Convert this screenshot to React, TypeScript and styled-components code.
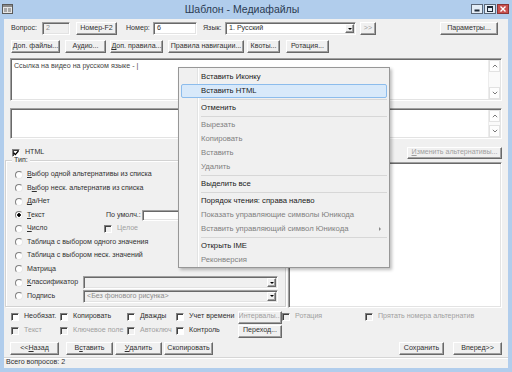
import styled, { createGlobalStyle, css } from 'styled-components'

const GlobalStyle = createGlobalStyle`
  html, body {
    margin: 0;
    padding: 0;
    background: #b1cdec;
  }
  body {
    font-family: "Liberation Sans", Arial, sans-serif;
  }
`

const raised = css`
  border: 1px solid;
  border-color: #fff #696969 #696969 #fff;
  box-shadow: inset -1px -1px 0 #a0a0a0;
  background: #f0f0f0;
`

const sunken = css`
  border: 1px solid;
  border-color: #a0a0a0 #fff #fff #a0a0a0;
  box-shadow: inset 1px 1px 0 #696969, inset -1px -1px 0 #e3e3e3;
`

const Frame = styled.div`
  width: 512px;
  height: 372px;
  display: flex;
  flex-direction: column;
  background: #b1cdec;
  overflow: hidden;
`

const TitleBar = styled.div`
  height: 19px;
  flex-shrink: 0;
  display: flex;
  align-items: flex-start;
  padding: 0 3px 0 2px;
`

const AppIcon = styled.svg`
  margin-top: 4px;
  flex-shrink: 0;
`

const Title = styled.div`
  flex: 1;
  text-align: center;
  font-size: 10.5px;
  line-height: 19px;
  color: #2b3b52;
`

const Controls = styled.div`
  display: flex;
  gap: 1px;
  margin-top: 4px;
`

const Control = styled.div<{ $close?: boolean }>`
  width: 12px;
  height: 10px;
  box-sizing: border-box;
  border: 1px solid ${(p) => (p.$close ? '#8a3434' : '#5b6778')};
  background: ${(p) => (p.$close ? '#c9504e' : '#e4edf7')};
  display: flex;
  align-items: center;
  justify-content: center;
`

const Client = styled.div`
  flex: 1;
  min-height: 0;
  margin: 0 4px 4px;
  background: #f0f0f0;
  display: flex;
  flex-direction: column;
  position: relative;
  font-size: 7.1px;
  line-height: 1;
  color: #303030;
`

const Row = styled.div<{ $top: number; $h: number }>`
  display: flex;
  align-items: center;
  flex-shrink: 0;
  height: ${(p) => p.$h}px;
  margin-top: ${(p) => p.$top}px;
  padding-right: 6px;
`

const Label = styled.span<{ $w?: number; $ml?: number; $off?: boolean }>`
  flex-shrink: 0;
  width: ${(p) => (p.$w ? `${p.$w}px` : 'auto')};
  margin-left: ${(p) => p.$ml ?? 0}px;
  white-space: nowrap;
  color: ${(p) => (p.$off ? '#a0a0a0' : 'inherit')};
`

const Btn = styled.div<{ $w: number; $ml?: number; $h?: number; $off?: boolean }>`
  ${raised}
  box-sizing: border-box;
  flex-shrink: 0;
  width: ${(p) => p.$w}px;
  height: ${(p) => p.$h ?? 13}px;
  margin-left: ${(p) => p.$ml ?? 0}px;
  display: flex;
  align-items: center;
  justify-content: center;
  white-space: nowrap;
  overflow: hidden;
  color: ${(p) => (p.$off ? '#a0a0a0' : 'inherit')};
`

const Field = styled.div<{ $w: number; $ml?: number; $h?: number; $off?: boolean }>`
  ${sunken}
  box-sizing: border-box;
  flex-shrink: 0;
  width: ${(p) => p.$w}px;
  height: ${(p) => p.$h ?? 13}px;
  margin-left: ${(p) => p.$ml ?? 0}px;
  padding: 0 1px 0 3px;
  display: flex;
  align-items: center;
  white-space: nowrap;
  overflow: hidden;
  background: ${(p) => (p.$off ? '#f0f0f0' : '#fff')};
  color: ${(p) => (p.$off ? '#8c8c8c' : 'inherit')};
`

const FieldText = styled.span`
  flex: 1;
  overflow: hidden;
`

const DropBtn = styled.span`
  ${raised}
  box-sizing: border-box;
  width: 9px;
  height: 9px;
  flex-shrink: 0;
  display: flex;
  align-items: center;
  justify-content: center;

  &::after {
    content: '';
    border-left: 2px solid transparent;
    border-right: 2px solid transparent;
    border-top: 2px solid #000;
  }
`

const Memo = styled.div<{ $top: number; $h: number }>`
  ${sunken}
  box-sizing: border-box;
  flex-shrink: 0;
  margin: ${(p) => p.$top}px 6px 0;
  height: ${(p) => p.$h}px;
  background: #fff;
  display: flex;
`

const MemoText = styled.div`
  flex: 1;
  padding: 4px 3px;
  color: #444;
  white-space: nowrap;
`

const ScrollBar = styled.div`
  width: 11px;
  margin: 1px 1px 1px 0;
  background: #fafafa;
  border-left: 1px solid #ececec;
  display: flex;
  flex-direction: column;
  justify-content: space-between;
`

const ScrollArrow = styled.div`
  height: 10px;
  border: 1px solid #e2e2e2;
  background: #fdfdfd;
  display: flex;
  align-items: center;
  justify-content: center;
`

const CheckBox = styled.span<{ $off?: boolean }>`
  box-sizing: border-box;
  width: 8px;
  height: 8px;
  flex-shrink: 0;
  border: 1px solid;
  border-color: #808080 #fff #fff #808080;
  box-shadow: inset 1px 1px 0 #404040;
  background: ${(p) => (p.$off ? '#f0f0f0' : '#fff')};
  display: flex;
  align-items: center;
  justify-content: center;
`

const Check = styled.div<{ $off?: boolean; $ml?: number }>`
  display: flex;
  align-items: center;
  gap: 5px;
  flex-shrink: 0;
  margin-left: ${(p) => p.$ml ?? 0}px;
  white-space: nowrap;
  color: ${(p) => (p.$off ? '#a0a0a0' : 'inherit')};
`

const Main = styled.div`
  display: flex;
  flex-shrink: 0;
  height: 149px;
  padding: 0 6px 0 1px;
`

const Group = styled.div`
  position: relative;
  box-sizing: border-box;
  width: 281px;
  height: 147px;
  margin-top: 1px;
  border: 1px solid #d2d2d2;
  box-shadow: inset 1px 1px 0 #fff, 1px 1px 0 #fff;
  padding: 7px 0 0 9px;
  display: flex;
  flex-direction: column;
`

const Legend = styled.span`
  position: absolute;
  top: -4px;
  left: 6px;
  padding: 0 2px;
  background: #f0f0f0;
`

const OptionRow = styled.div`
  height: 13.5px;
  display: flex;
  align-items: center;
  flex-shrink: 0;
`

const Radio = styled.div<{ $w?: number }>`
  display: flex;
  align-items: center;
  gap: 4px;
  flex-shrink: 0;
  width: ${(p) => (p.$w ? `${p.$w}px` : 'auto')};
  white-space: nowrap;
`

const RadioDot = styled.span<{ $on?: boolean }>`
  box-sizing: border-box;
  width: 8px;
  height: 8px;
  flex-shrink: 0;
  border-radius: 50%;
  border: 1px solid;
  border-color: #808080 #e8e8e8 #e8e8e8 #808080;
  background: ${(p) =>
    p.$on ? 'radial-gradient(circle, #000 0 1.5px, #fff 2px)' : '#fff'};
`

const ListBox = styled.div`
  ${sunken}
  box-sizing: border-box;
  width: 214px;
  height: 146px;
  margin: 3px 0 0 2px;
  background: #fff;
`

const Options = styled.div`
  display: grid;
  grid-template-columns: 49px 67px 49px 62px 44px 83px auto;
  grid-auto-rows: 14px;
  align-items: center;
  flex-shrink: 0;
  margin-top: 2px;
  padding-left: 7px;
`

const Spacer = styled.div`
  flex: 1;
`

const StatusBar = styled.div`
  flex: 1;
  margin-top: 2px;
  border-top: 1px solid #d6d6d6;
  box-shadow: inset 0 1px 0 #fff;
  display: flex;
  align-items: center;
  padding-left: 2px;
`

const Menu = styled.div`
  position: absolute;
  left: 174px;
  top: 48px;
  width: 212px;
  box-sizing: border-box;
  padding: 2px 0 0;
  border: 1px solid #979797;
  background: linear-gradient(
    to right,
    #f0f0f0 0 18px,
    #e2e3e3 18px 19px,
    #fff 19px 20px,
    #f0f0f0 20px
  );
  box-shadow: 2px 2px 3px rgba(0, 0, 0, 0.25);
  font-size: 7.7px;
`

const MenuItem = styled.div<{ $off?: boolean; $hot?: boolean }>`
  position: relative;
  box-sizing: border-box;
  height: 14px;
  margin: 0 2px;
  padding-left: 19px;
  display: flex;
  align-items: center;
  white-space: nowrap;
  border: 1px solid transparent;
  border-radius: 2px;
  color: ${(p) => (p.$off ? '#808080' : '#1a1a1a')};
  ${(p) =>
    p.$hot &&
    css`
      background: #d8e9fa;
      border-color: #8cbcec;
    `}
`

const SubArrow = styled.span`
  position: absolute;
  right: 5px;
  top: 4px;
  border-top: 2px solid transparent;
  border-bottom: 2px solid transparent;
  border-left: 2px solid #8a8a8a;
`

const MenuSep = styled.div`
  height: 3px;
  margin: 0 2px 0 22px;
  display: flex;
  align-items: center;

  &::after {
    content: '';
    flex: 1;
    height: 1px;
    background: #d7d7d7;
  }
`

function Tick() {
  return (
    <svg width="6" height="6" viewBox="0 0 6 6">
      <path d="M0.6 2.8 L2.3 4.6 L5.4 1" fill="none" stroke="#000" strokeWidth="1.3" />
    </svg>
  )
}

function Chevron({ down }: { down?: boolean }) {
  return (
    <svg width="6" height="4" viewBox="0 0 6 4">
      <path
        d={down ? 'M0.8 0.8 L3 3 L5.2 0.8' : 'M0.8 3.2 L3 1 L5.2 3.2'}
        fill="none"
        stroke="#6a6a6a"
        strokeWidth="0.9"
      />
    </svg>
  )
}

function ScrollSide() {
  return (
    <ScrollBar>
      <ScrollArrow>
        <Chevron />
      </ScrollArrow>
      <ScrollArrow>
        <Chevron down />
      </ScrollArrow>
    </ScrollBar>
  )
}

const checkRows = [
  { text: 'Необязат.' },
  { text: 'Копировать' },
  { text: 'Дважды' },
  { text: 'Учет времени' },
  { button: 'Интервалы...', off: true },
  { text: 'Ротация', off: true },
  { text: 'Прятать номера альтернатив', off: true },
  { text: 'Текст', off: true },
  { text: 'Ключевое поле', off: true },
  { text: 'Автоключ', off: true },
  { text: 'Контроль' },
  { button: 'Переход...' },
]

export default function App() {
  return (
    <Frame>
      <GlobalStyle />
      <TitleBar>
        <AppIcon width="11" height="10" viewBox="0 0 11 10">
          <rect x="0.5" y="0.5" width="10" height="9" fill="#e6e6e6" stroke="#5a5a5a" />
          <rect x="1" y="1" width="9" height="2" fill="#8a8a8a" />
          <path d="M2 5 H5 M2 7 H5 M6 5 H9 M6 7 H9" stroke="#6a6a6a" />
        </AppIcon>
        <Title>Шаблон - Медиафайлы</Title>
        <Controls>
          <Control>
            <svg width="6" height="6" viewBox="0 0 6 6">
              <rect x="0.5" y="3.5" width="5" height="2" fill="#1f2a38" />
            </svg>
          </Control>
          <Control>
            <svg width="6" height="6" viewBox="0 0 6 6">
              <rect x="0.5" y="0.5" width="5" height="5" fill="none" stroke="#1f2a38" />
              <rect x="0.5" y="0.5" width="5" height="1.5" fill="#1f2a38" />
            </svg>
          </Control>
          <Control $close>
            <svg width="6" height="6" viewBox="0 0 6 6">
              <path d="M0.5 0.5 L5.5 5.5 M5.5 0.5 L0.5 5.5" stroke="#fff" strokeWidth="1.4" />
            </svg>
          </Control>
        </Controls>
      </TitleBar>

      <Client>
        <Row $top={3} $h={13}>
          <Label $w={31} $ml={7}>Вопрос:</Label>
          <Field $w={28} $off>2</Field>
          <Btn $w={41} $ml={6}>Номер-F2</Btn>
          <Label $w={27} $ml={9}>Номер:</Label>
          <Field $w={44}>6</Field>
          <Label $w={22} $ml={6}>Язык:</Label>
          <Field $w={131}>
            <FieldText>1. Русский</FieldText>
            <DropBtn />
          </Field>
          <Btn $w={16} $ml={4} $off>&gt;&gt;</Btn>
          <Btn $w={58} $ml={64}>Параметры...</Btn>
        </Row>

        <Row $top={5} $h={13}>
          <Btn $w={49} $ml={7}>Доп. файлы...</Btn>
          <Btn $w={41} $ml={5}>Аудио...</Btn>
          <Btn $w={53} $ml={4}><u>Д</u>оп. правила...</Btn>
          <Btn $w={76} $ml={5}>Правила навигации...</Btn>
          <Btn $w={33} $ml={3}>Квоты...</Btn>
          <Btn $w={43} $ml={6}>Ротация...</Btn>
        </Row>

        <Memo $top={5} $h={43}>
          <MemoText>Ссылка на видео на русском языке - |</MemoText>
          <ScrollSide />
        </Memo>

        <Memo $top={7} $h={31}>
          <MemoText />
          <ScrollSide />
        </Memo>

        <Row $top={8} $h={12}>
          <Check $ml={8}>
            <CheckBox>
              <Tick />
            </CheckBox>
            HTML
          </Check>
          <Spacer />
          <Btn $w={95} $h={12} $off>
            <u>И</u>зменить альтернативы...
          </Btn>
        </Row>

        <Main>
          <Group>
            <Legend>Тип:</Legend>
            <OptionRow>
              <Radio>
                <RadioDot />
                <span><u>В</u>ыбор одной альтернативы из списка</span>
              </Radio>
            </OptionRow>
            <OptionRow>
              <Radio>
                <RadioDot />
                <span>В<u>ы</u>бор неск. альтернатив из списка</span>
              </Radio>
            </OptionRow>
            <OptionRow>
              <Radio>
                <RadioDot />
                <span><u>Д</u>а/Нет</span>
              </Radio>
            </OptionRow>
            <OptionRow>
              <Radio $w={91}>
                <RadioDot $on />
                <span><u>Т</u>екст</span>
              </Radio>
              <Label $w={36}>По умолч.:</Label>
              <Field $w={48} $h={11} />
            </OptionRow>
            <OptionRow>
              <Radio $w={89}>
                <RadioDot />
                <span><u>Ч</u>исло</span>
              </Radio>
              <Check $off>
                <CheckBox $off />
                Целое
              </Check>
            </OptionRow>
            <OptionRow>
              <Radio>
                <RadioDot />
                <span>Таблица с выбором одного значения</span>
              </Radio>
            </OptionRow>
            <OptionRow>
              <Radio>
                <RadioDot />
                <span>Таблица с выбором неск. значений</span>
              </Radio>
            </OptionRow>
            <OptionRow>
              <Radio>
                <RadioDot />
                <span>Матрица</span>
              </Radio>
            </OptionRow>
            <OptionRow>
              <Radio $w={68}>
                <RadioDot />
                <span><u>К</u>лассификатор</span>
              </Radio>
              <Field $w={195} $off>
                <FieldText />
                <DropBtn />
              </Field>
            </OptionRow>
            <OptionRow>
              <Radio $w={68}>
                <RadioDot />
                <span>Подпись</span>
              </Radio>
              <Field $w={195} $off>
                <FieldText>&lt;Без фонового рисунка&gt;</FieldText>
                <DropBtn />
              </Field>
            </OptionRow>
          </Group>
          <ListBox />
        </Main>

        <Options>
          {checkRows.map((item, i) =>
            item.button ? (
              <Btn key={i} $w={44} $off={item.off}>
                {item.button}
              </Btn>
            ) : (
              <Check key={i} $off={item.off}>
                <CheckBox $off={item.off} />
                {item.text}
              </Check>
            ),
          )}
        </Options>

        <Row $top={4} $h={13}>
          <Btn $w={49} $ml={6}>&lt;&lt;<u>Н</u>азад</Btn>
          <Btn $w={47} $ml={7}>В<u>с</u>тавить</Btn>
          <Btn $w={47} $ml={2}><u>У</u>далить</Btn>
          <Btn $w={49} $ml={2}>Скопировать</Btn>
          <Spacer />
          <Btn $w={45}>Сохранить</Btn>
          <Btn $w={49} $ml={9}>Вперед&gt;&gt;</Btn>
        </Row>

        <StatusBar>Всего вопросов: 2</StatusBar>

        <Menu>
          <MenuItem>Вставить Иконку</MenuItem>
          <MenuItem $hot>Вставить HTML</MenuItem>
          <MenuSep />
          <MenuItem>Отменить</MenuItem>
          <MenuSep />
          <MenuItem $off>Вырезать</MenuItem>
          <MenuItem $off>Копировать</MenuItem>
          <MenuItem $off>Вставить</MenuItem>
          <MenuItem $off>Удалить</MenuItem>
          <MenuSep />
          <MenuItem>Выделить все</MenuItem>
          <MenuSep />
          <MenuItem>Порядок чтения: справа налево</MenuItem>
          <MenuItem $off>Показать управляющие символы Юникода</MenuItem>
          <MenuItem $off>
            Вставить управляющий символ Юникода
            <SubArrow />
          </MenuItem>
          <MenuSep />
          <MenuItem>Открыть IME</MenuItem>
          <MenuItem $off>Реконверсия</MenuItem>
        </Menu>
      </Client>
    </Frame>
  )
}
